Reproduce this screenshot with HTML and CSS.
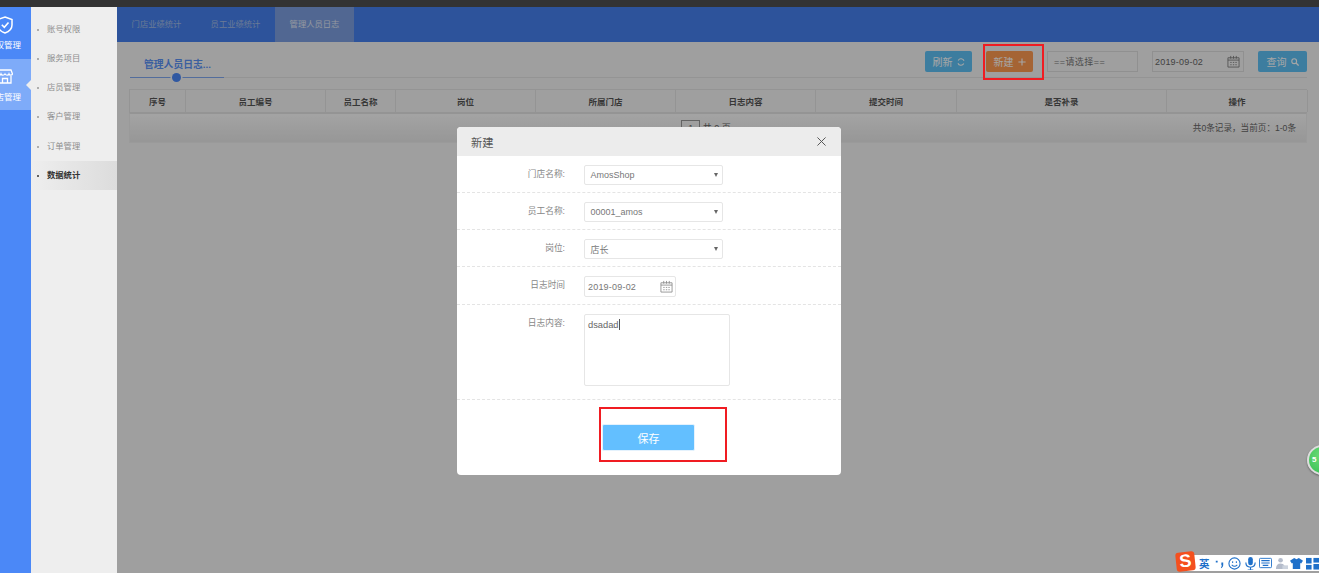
FILE: index.html
```html
<!DOCTYPE html>
<html lang="zh-CN">
<head>
<meta charset="utf-8">
<title>管理人员日志</title>
<link rel="stylesheet" href="styles.css">
</head>
<body>
<div class="topbar"></div>
<div class="app">
  <nav class="rail">
    <a class="rail-item">
      <svg class="rail-icon" viewBox="0 0 16 18" width="16" height="18"><path d="M8 1 L15 3.5 V9 C15 13 11.5 15.8 8 17 C4.500 15.800 1 13 1 9 V3.500 Z" fill="none" stroke="#fff" stroke-width="1.500"/><path d="M4.800 8.800 L7.300 11.300 L11.500 6.500" fill="none" stroke="#fff" stroke-width="1.600"/></svg>
      <span class="rail-label">授权管理</span>
    </a>
    <a class="rail-item active">
      <svg class="rail-icon" viewBox="0 0 16 16" width="16" height="16"><path d="M2 2 H14 L15.500 6 C15 7.500 12.500 7.500 12 6 C11.500 7.500 9 7.500 8 6 C7 7.500 4.500 7.500 4 6 C3.500 7.500 1 7.500 .5 6 Z M2 8 V15 H14 V8 M5.500 15 V10.500 H10.500 V15" fill="none" stroke="#fff" stroke-width="1.300"/></svg>
      <span class="rail-label">门店管理</span>
      <i class="rail-arrow"></i>
    </a>
  </nav>
  <aside class="side">
    <a class="side-item">账号权限</a>
    <a class="side-item">服务项目</a>
    <a class="side-item">店员管理</a>
    <a class="side-item">客户管理</a>
    <a class="side-item">订单管理</a>
    <a class="side-item current">数据统计</a>
  </aside>
  <main class="main">
    <div class="tabs">
      <a class="tab">门店业绩统计</a>
      <a class="tab">员工业绩统计</a>
      <a class="tab on">管理人员日志</a>
    </div>
    <div class="bar">
      <div class="title">管理人员日志...<i class="title-dot"></i></div>
      <div class="tools">
        <button class="btn blue btn-refresh">刷新
          <svg viewBox="0 0 10 10" width="8" height="8"><path d="M8.800 3.500 A4 4 0 0 0 1.500 3 M1.200 6.500 A4 4 0 0 0 8.500 7" fill="none" stroke="#fff" stroke-width="1.300"/></svg>
        </button>
        <button class="btn orange">新建
          <svg viewBox="0 0 10 10" width="8" height="8"><path d="M5 .5 V9.500 M.5 5 H9.500" stroke="#fff" stroke-width="1.400"/></svg>
        </button>
        <div class="field field-select">==请选择==</div>
        <div class="field field-date">2019-09-02
          <svg class="cal" viewBox="0 0 14 14" width="13" height="13"><path d="M1 3 H13 V13 H1 Z M1 5.500 H13 M4 1 V4 M7 1 V4 M10 1 V4 M3.500 8 H5 M6.300 8 H7.800 M9 8 H10.500 M3.500 10.500 H5 M6.300 10.500 H7.800 M9 10.500 H10.500" fill="none" stroke="#777" stroke-width=".9"/></svg>
        </div>
        <button class="btn blue btn-query">查询
          <svg viewBox="0 0 10 10" width="8" height="8"><circle cx="4" cy="4" r="3" fill="none" stroke="#fff" stroke-width="1.400"/><path d="M6.300 6.300 L9.500 9.500" stroke="#fff" stroke-width="1.600"/></svg>
        </button>
      </div>
    </div>
    <div class="table">
      <div class="thead">
        <div class="th">序号</div><div class="th">员工编号</div><div class="th">员工名称</div><div class="th">岗位</div><div class="th">所属门店</div><div class="th">日志内容</div><div class="th">提交时间</div><div class="th">是否补录</div><div class="th">操作</div>
      </div>
      <div class="tfoot">
        <div class="pager"><span class="page-box">1</span> 共 0 页</div>
        <div class="count">共0条记录，当前页：1-0条</div>
      </div>
    </div>
    <div class="overlay"></div>
    <div class="mark mark-new"></div>
    <section class="modal">
      <header class="modal-head">
        <h2 class="modal-title">新建</h2>
        <svg class="modal-close" viewBox="0 0 10 10" width="9" height="9"><path d="M.5 .5 L9.500 9.500 M9.500 .5 L.5 9.500" stroke="#555" stroke-width="1.100"/></svg>
      </header>
      <div class="row">
        <label class="label">门店名称:</label>
        <div class="input select">AmosShop<i class="caret"></i></div>
      </div>
      <div class="row">
        <label class="label">员工名称:</label>
        <div class="input select">00001_amos<i class="caret"></i></div>
      </div>
      <div class="row">
        <label class="label">岗位:</label>
        <div class="input select">店长<i class="caret"></i></div>
      </div>
      <div class="row row-date">
        <label class="label">日志时间</label>
        <div class="input date">2019-09-02
          <svg class="cal" viewBox="0 0 14 14" width="13" height="13"><path d="M1 3 H13 V13 H1 Z M1 5.500 H13 M4 1 V4 M7 1 V4 M10 1 V4 M3.500 8 H5 M6.300 8 H7.800 M9 8 H10.500 M3.500 10.500 H5 M6.300 10.500 H7.800 M9 10.500 H10.500" fill="none" stroke="#888" stroke-width=".9"/></svg>
        </div>
      </div>
      <div class="row row-text">
        <label class="label">日志内容:</label>
        <div class="input area">dsadad<i class="cursor"></i></div>
      </div>
      <div class="modal-foot">
        <button class="save">保存</button>
        <div class="mark mark-save"></div>
      </div>
    </section>
  </main>
</div>
<div class="ball">5</div>
<div class="ime">
  <span class="ime-logo">S</span>
  <span class="ime-word">英</span>
  <svg class="ime-icon" viewBox="0 0 14 14" width="13" height="13"><path d="M3 4 h2 v2 h-2 z M9 6 h2 v3 q0 2 -2 3 l-.5 -1 q1 -.5 1 -2 h-.5 z" fill="#1f70c9"/></svg>
  <svg class="ime-icon" viewBox="0 0 14 14" width="13" height="13"><circle cx="7" cy="7" r="6" fill="none" stroke="#1f70c9" stroke-width="1.200"/><path d="M5 4.500 V6.500 M9 4.500 V6.500 M4 8.500 Q7 11.500 10 8.500" fill="none" stroke="#1f70c9" stroke-width="1.100"/></svg>
  <svg class="ime-icon" viewBox="0 0 14 14" width="13" height="13"><rect x="4.500" y="0" width="5" height="9" rx="2.500" fill="#1f70c9"/><path d="M2 6 Q2 11 7 11 Q12 11 12 6 M7 11 V14 M4 14 H10" fill="none" stroke="#1f70c9" stroke-width="1.200"/></svg>
  <svg class="ime-icon" viewBox="0 0 14 12" width="13" height="12"><rect x=".5" y="1" width="13" height="10" rx="1" fill="none" stroke="#1f70c9"/><path d="M2.500 3.500 H11.500 M2.500 6 H11.500 M4 8.500 H10" stroke="#1f70c9" stroke-width="1.200"/></svg>
  <svg class="ime-icon" viewBox="0 0 14 14" width="13" height="13"><circle cx="6" cy="3.500" r="2.500" fill="#b4bccb"/><path d="M1 13 Q1 7 6 7 Q9 7 10 9 V13 Z" fill="#b4bccb"/><rect x="8" y="9" width="6" height="4" fill="#ccd3de"/></svg>
  <svg class="ime-icon" viewBox="0 0 14 14" width="13" height="13"><path d="M4.500 1 L7 2.500 L9.500 1 L14 4 L12 7 L11 6.500 V13 H3 V6.500 L2 7 L0 4 Z" fill="#1f70c9"/></svg>
  <svg class="ime-icon" viewBox="0 0 14 14" width="13" height="13"><rect x="0" y="1" width="6" height="6" fill="#1f70c9"/><rect x="8" y="1" width="6" height="5" fill="#1f70c9"/><rect x="0" y="8.500" width="6" height="5" fill="#1f70c9"/><rect x="8" y="7.500" width="6" height="6" fill="#1f70c9"/></svg>
</div>
</body>
</html>
```
FILE: styles.css
```css
* { box-sizing: border-box; }
html, body { margin: 0; height: 573px; overflow: hidden; }
body {
  position: relative;
  font-family: "Liberation Sans", "Noto Sans CJK SC", sans-serif;
  font-size: 8.5px;
  color: #666;
  background: #f5f5f5;
}
.topbar { height: 7px; background: #333; }
.app { display: flex; height: 566px; }

/* icon rail */
.rail { width: 31px; flex: none; background: #4b88f7; overflow: hidden; }
.rail-item { position: relative; display: flex; flex-direction: column; height: 52px; padding-top: 9px; color: #fff; }
.rail-item.active { background: #7eabf9; height: 51px; padding-top: 9px; }
.rail-icon { margin-left: -3px; }
.rail-label { display: flex; justify-content: flex-end; width: 21px; margin-top: 5px; white-space: nowrap; font-size: 8.5px; line-height: 12px; }
.rail-item.active .rail-label { margin-top: 7px; }
.rail-arrow { position: absolute; right: 0; top: 21px; border: 5px solid transparent; border-right-color: #eee; border-left: 0; }

/* secondary menu */
.side { width: 86px; flex: none; background: #eee; padding-top: 7.500px; }
.side-item { position: relative; display: block; height: 29.300px; line-height: 29.300px; padding-left: 16px; color: #8d8d8d; font-size: 8.300px; }
.side-item::before { content: ""; position: absolute; left: 5.500px; top: 14px; width: 2px; height: 2px; border-radius: 50%; background: #999; }
.side-item.current { color: #333; font-weight: 700; background: linear-gradient(90deg, #eee, #dcdcdc); }
.side-item.current::before { background: #333; }

/* main column */
.main { position: relative; flex: 1; min-width: 0; }
.tabs { display: flex; height: 35px; background: #4580ef; }
.tab { width: 79px; text-align: center; line-height: 35px; color: #a4bde6; font-size: 8.300px; }
.tab.on { background: #7d9fe0; color: #e2e9f6; }

.bar { display: flex; justify-content: space-between; height: 36px; margin: 0 12px 0 13px; border-bottom: 1px solid #e4e4e4; }
.title { position: relative; width: 94px; height: 36px; padding: 17px 0 0 14px; margin-bottom: -1px; border-bottom: 1px solid #80a8f0; color: #5b93f5; font-weight: 700; font-size: 9.800px; line-height: 12px; white-space: nowrap; }
.title-dot { position: absolute; left: 42px; bottom: -5px; width: 9px; height: 9px; border-radius: 50%; background: #4b88f7; box-shadow: 0 0 0 1.500px #f5f5f5; }
.tools { display: flex; align-items: flex-start; padding-top: 9px; }
.btn { display: flex; align-items: center; justify-content: center; gap: 4px; height: 21px; padding: 0; border: 0; border-radius: 2px; font: inherit; font-size: 10px; color: #fff; }
.btn.blue { background: #5ec0f4; }
.btn.orange { background: #fd9a50; }
.btn-refresh { width: 47px; margin-right: 14px; }
.orange { width: 47px; margin-right: 14px; }
.btn-query { width: 49px; }
.field { display: flex; align-items: center; height: 21px; border: 1px solid #ddd; font-size: 9px; color: #666; }
.field-select { width: 91px; padding-left: 6px; letter-spacing: .45px; margin-right: 14px; color: #777; }
.field-date { position: relative; width: 92px; padding-left: 2px; margin-right: 14px; letter-spacing: .2px; }
.field-date .cal { position: absolute; right: 3px; top: 3px; }

.table { margin: 11px 12px 0; }
.thead { display: grid; grid-template-columns: 56px 140px 70px 140px 140px 140px 141px 210px 141px; height: 24px; border: 1px solid #e3e3e3; border-right-width: 0; }
.th { display: flex; align-items: center; justify-content: center; border-right: 1px solid #e3e3e3; font-weight: 700; font-size: 8.500px; color: #555; }
.tfoot { position: relative; height: 30px; background: linear-gradient(#fbfbfb, #e8e8e8); border: 1px solid #ededed; border-top-color: #e3e3e3; }
.pager { padding-top: 6px; text-align: center; font-size: 9px; line-height: 14px; padding-right: 24px; }
.page-box { display: inline-block; width: 19px; height: 20px; border: 1px solid #999; text-align: center; }
.count { position: absolute; right: 10px; top: 8px; font-size: 8.600px; line-height: 12px; color: #666; }

/* dim layer and dialog */
.overlay { position: absolute; top: 0; right: 0; bottom: 0; left: 0; background: rgba(0, 0, 0, .35); }
.mark { position: absolute; border: 2px solid #f01c22; }
.mark-new { left: 866px; top: 37px; width: 61px; height: 36px; }
.modal { position: absolute; left: 340px; top: 120px; width: 384px; height: 348px; background: #fff; border-radius: 4px; overflow: hidden; }
.modal-head { display: flex; justify-content: space-between; align-items: center; height: 29px; padding: 0 15px 0 14px; background: #ececec; }
.modal-title { margin: 0; font-weight: 400; font-size: 11.300px; color: #555; }
.row { display: flex; height: 37px; padding-top: 9px; border-bottom: 1px dashed #e4e4e4; }
.label { width: 108px; flex: none; text-align: right; font-size: 8.700px; line-height: 12px; color: #888; margin-right: 19px; padding-top: 3px; }
.input { position: relative; margin-left: 0; border: 1px solid #e6e6e6; border-radius: 2px; font-size: 9px; color: #777; }
.select { display: flex; align-items: center; width: 139px; height: 20px; padding-left: 5.500px; }
.caret { position: absolute; right: 4px; top: 7px; border: 2.500px solid transparent; border-top: 4px solid #666; border-bottom: 0; }
.row-date { height: 38px; }
.date { display: flex; align-items: center; width: 92px; height: 21px; padding-left: 3px; letter-spacing: .2px; }
.date .cal { position: absolute; right: 2px; top: 3px; }
.row-text { height: 95px; }
.area { width: 146px; height: 72px; padding: 4px 3px; line-height: 12px; color: #666; font-size: 9.300px; }
.cursor { display: inline-block; width: 1px; height: 11px; background: #555; vertical-align: -2px; }
.modal-foot { position: relative; height: 75px; padding: 24px 0 0 145px; }
.save { display: block; width: 93px; height: 27px; border: 1px solid #e4f2fd; border-radius: 2px; background: #63bfff; color: #fff; font: inherit; font-size: 11px; }
.mark-save { left: 142px; top: 7px; width: 128px; height: 55px; }

/* desktop widgets floating over the page */
.ball { position: absolute; left: 1307px; top: 445px; width: 30px; height: 30px; padding-left: 3px; border-radius: 50%; background: radial-gradient(circle at 50% 35%, #6fdc7a, #35bf52); border: 2px solid #ddd; color: #fff; font-weight: 700; font-size: 8px; line-height: 26px; box-shadow: 0 1px 2px rgba(0,0,0,.4); }
.ime { position: absolute; left: 1186px; top: 555px; width: 133px; height: 16px; display: flex; align-items: center; gap: 2.500px; padding-left: 13px; background: #fff; }
.ime-logo { position: absolute; left: -10px; top: -3px; width: 19px; height: 19px; border-radius: 3px; background: #f4501e; color: #fff; font-weight: 700; font-size: 18px; line-height: 19px; text-align: center; transform: rotate(-6deg); }
.ime-word { width: 11px; color: #1f70c9; font-weight: 700; font-size: 10.500px; }
.ime-icon { flex: none; }
```
